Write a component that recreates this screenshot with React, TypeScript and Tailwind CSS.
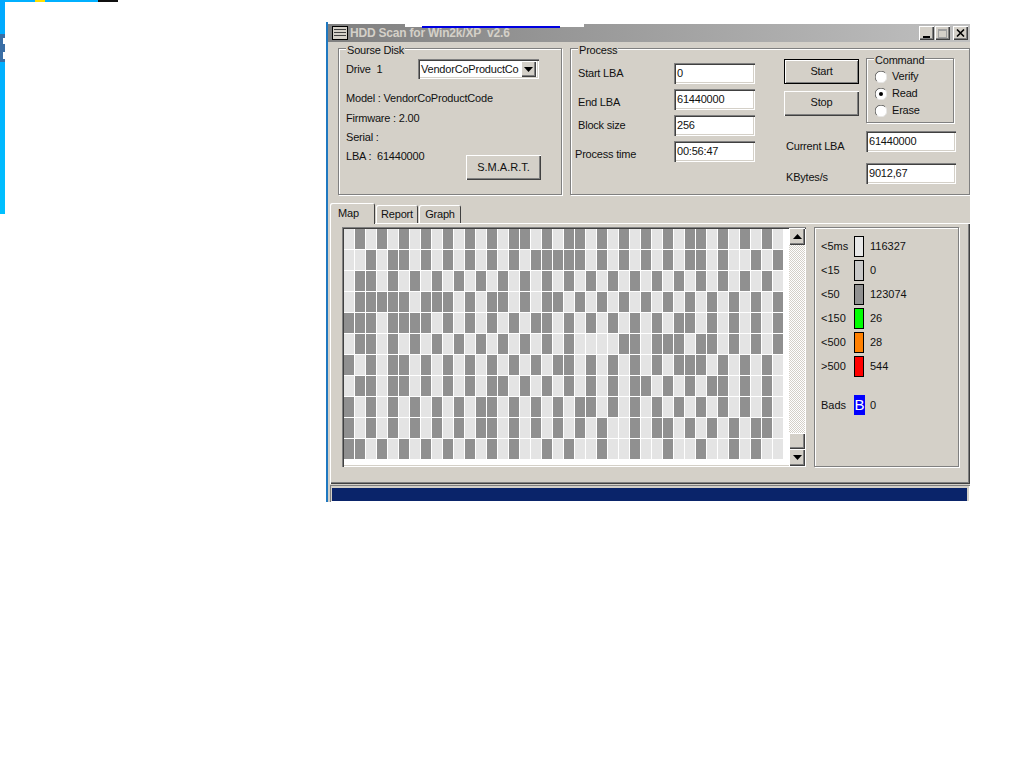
const mapRows = [
	"0101010101010101101011010101010110101010",
	"0010110101010101011111010101010110100101",
	"0110101010101010101010101010101010101010",
	"0111110111010110101101010101010101010101",
	"1110111101010101011010101010101101010101",
	"0110101010101010101010000110111011010101",
	"1010110101010101010110101010101110101010",
	"0110110101010110101010101011010101101010",
	"1010101010101101010101101010101010101010",
	"1010101010101101010101010010110101010110",
	"1101010101010101001010010010010010010100",
];

const legend = [
	{ label: "<5ms", value: "116327", color: "bg-[#e8e8e8]" },
	{ label: "<15", value: "0", color: "bg-[#c8c8c8]" },
	{ label: "<50", value: "123074", color: "bg-[#909090]" },
	{ label: "<150", value: "26", color: "bg-[#00ff00]" },
	{ label: "<500", value: "28", color: "bg-[#ff8000]" },
	{ label: ">500", value: "544", color: "bg-[#ff0000]" },
];

const processRows = [
	{ label: "Start LBA", value: "0", labelClass: "pl-[3px]" },
	{ label: "End LBA", value: "61440000", labelClass: "pl-[3px] pt-[5px]" },
	{ label: "Block size", value: "256", labelClass: "pl-[3px]" },
	{ label: "Process time", value: "00:56:47", labelClass: "pt-[5px]" },
];

const raised =
	"bg-[#d4d0c8] shadow-[inset_1px_1px_0_#fff,inset_-1px_-1px_0_#404040,inset_-2px_-2px_0_#808080]";
const sunken =
	"bg-white shadow-[inset_1px_1px_0_#808080,inset_2px_2px_0_#404040,inset_-1px_-1px_0_#fff,inset_-2px_-2px_0_#d4d0c8]";
const etched = "border border-[#808080] shadow-[1px_1px_0_#fff,inset_1px_1px_0_#fff]";

function Field({ value, className }: { value: string; className: string }) {
	return <div className={`${sunken} ${className} h-[21px] pl-[3px] flex items-center`}>{value}</div>;
}

function Group({ title, className, children }: { title: string; className: string; children: React.ReactNode }) {
	return (
		<div className={`relative ${etched} ${className}`}>
			<span className="absolute left-[7px] top-[-6px] h-[15px] leading-[15px] bg-[#d4d0c8] px-px">{title}</span>
			{children}
		</div>
	);
}

function Radio({ label, checked }: { label: string; checked?: boolean }) {
	return (
		<div className="flex items-center h-[17px] gap-[5px]">
			<svg width="12" height="12" viewBox="0 0 12 12">
				<circle cx="6" cy="6" r="5.5" fill="#fff" />
				<path d="M1.8 10.2A5.5 5.5 0 0 1 10.2 1.8" fill="none" stroke="#606060" strokeWidth="1" />
				<path d="M10.2 1.8A5.5 5.5 0 0 1 1.8 10.2" fill="none" stroke="#e8e8e8" strokeWidth="1" />
				{checked && <circle cx="6" cy="6" r="2" fill="#000" />}
			</svg>
			<span>{label}</span>
		</div>
	);
}

function CaptionButton({ children }: { children: React.ReactNode }) {
	return <div className={`${raised} w-[15px] h-[14px] flex items-center justify-center`}>{children}</div>;
}

function ScrollArrow({ up }: { up?: boolean }) {
	return (
		<div className={`${raised} h-[17px] flex items-center justify-center`}>
			<svg width="9" height="5" viewBox="0 0 9 5">
				<path d={up ? "M4.5 0L9 5H0Z" : "M0 0H9L4.5 5Z"} fill="#000" />
			</svg>
		</div>
	);
}

export default function App() {
	return (
		<div className="relative w-[1024px] h-[768px] bg-white overflow-hidden font-['Liberation_Sans',Arial,sans-serif] text-[11px] tracking-[-0.2px] text-[#111]">
			{/* bits of the desktop left around the window */}
			<div className="absolute left-0 top-0 w-[5px] h-[214px] bg-gradient-to-b from-[#00a8ff] to-[#00c0ff]">
				<div className="relative mt-[34px] h-[28px] bg-[#3a6ea5]">
					<div className="absolute left-[3px] top-[4px] w-[2px] h-[6px] bg-white" />
					<div className="absolute left-[3px] top-[18px] w-[2px] h-[7px] bg-white" />
				</div>
			</div>
			<div className="absolute left-[5px] top-0 w-[113px] h-[2px] bg-[#00b0ff]">
				<div className="absolute left-[30px] w-[10px] h-[2px] bg-[#ffe000]" />
				<div className="absolute left-[93px] w-[20px] h-[2px] bg-[#101010]" />
			</div>
			<div className="absolute left-[326px] top-[22px] w-[2px] h-[480px] bg-[#1f78c0]" />

			<div className="absolute left-[328px] top-[24px] w-[642px] h-[478px] bg-[#d4d0c8] flex flex-col">
				{/* title bar */}
				<div className="h-[18px] shrink-0 flex items-center pl-[4px] pr-[2px] bg-gradient-to-r from-[#808080] to-[#c0c0c0]">
					<svg width="16" height="14" viewBox="0 0 16 14" className="shrink-0">
						<rect x="0.5" y="0.5" width="15" height="13" fill="#d4d0c8" stroke="#000" />
						<rect x="2" y="3" width="12" height="1" fill="#404040" />
						<rect x="2" y="6" width="12" height="1" fill="#404040" />
						<rect x="2" y="9" width="12" height="1" fill="#404040" />
					</svg>
					<span className="ml-[2px] font-bold text-[12px] tracking-[-0.2px] text-[#d4d0c8] whitespace-pre">HDD Scan for Win2k/XP  v2.6</span>
					<div className="ml-auto flex">
						<CaptionButton>
							<div className="w-[7px] h-[2px] bg-black mt-[7px] mr-px" />
						</CaptionButton>
						<div className="ml-px">
							<CaptionButton>
								<div className="w-[9px] h-[9px] border border-[#a0a0a0] border-t-2" />
							</CaptionButton>
						</div>
						<div className="ml-[3px]">
							<CaptionButton>
								<svg width="9" height="8" viewBox="0 0 9 8">
									<path d="M1 0.5L8 7.5M8 0.5L1 7.5" stroke="#000" strokeWidth="1.6" />
								</svg>
							</CaptionButton>
						</div>
					</div>
				</div>

				{/* top groups */}
				<div className="flex mt-[6px] ml-[10px] gap-[8px] shrink-0">
					<Group title="Sourse Disk" className="w-[224px] h-[147px] pl-[7px] pt-[10px]">
						<div className="flex items-center h-[20px]">
							<span className="w-[72px] pt-px whitespace-pre">Drive  1</span>
							<div className={`${sunken} w-[121px] h-[20px] flex items-center pl-[3px] pr-[2px]`}>
								<span className="whitespace-nowrap w-[100px]">VendorCoProductCo</span>
								<div className={`${raised} w-[15px] h-[16px] flex items-center justify-center`}>
									<svg width="9" height="5" viewBox="0 0 9 5">
										<path d="M0 0H9L4.5 5Z" fill="#000" />
									</svg>
								</div>
							</div>
						</div>
						<div className="flex mt-[9px]">
							<div className="w-[120px] shrink-0 whitespace-nowrap">
								<div className="h-[20px] leading-[20px]">Model : VendorCoProductCode</div>
								<div className="h-[20px] leading-[20px]">Firmware : 2.00</div>
								<div className="h-[19px] leading-[19px]">Serial :</div>
								<div className="h-[18px] leading-[18px] whitespace-pre">LBA :  61440000</div>
							</div>
							<div className={`${raised} w-[75px] h-[25px] mt-[67px] flex items-center justify-center tracking-normal`}>S.M.A.R.T.</div>
						</div>
					</Group>

					<Group title="Process" className="w-[400px] h-[147px] flex">
						<div className="w-[180px] ml-[4px] mt-[14px] shrink-0 flex flex-col gap-[5px]">
							{processRows.map((row) => (
								<div key={row.label} className="flex items-center justify-between">
									<span className={`${row.labelClass} leading-[11px]`}>{row.label}</span>
									<Field value={row.value} className="w-[81px]" />
								</div>
							))}
						</div>
						<div className="ml-[29px] mt-[10px] w-[172px]">
							<div className="flex gap-[7px]">
								<div className="flex flex-col gap-[7px] w-[75px]">
									<div className="h-[25px] flex items-center justify-center bg-[#d4d0c8] border border-black shadow-[inset_1px_1px_0_#fff,inset_-1px_-1px_0_#808080]">Start</div>
									<div className={`${raised} h-[25px] pb-[2px] flex items-center justify-center`}>Stop</div>
								</div>
								<Group title="Command" className="w-[88px] h-[65px] mt-[-1px] pl-[8px] pt-[9px]">
									<Radio label="Verify" />
									<Radio label="Read" checked />
									<Radio label="Erase" />
								</Group>
							</div>
							<div className="flex items-center justify-between mt-[8px] pl-[2px]">
								<span className="pt-[9px] leading-[11px]">Current LBA</span>
								<Field value="61440000" className="w-[90px]" />
							</div>
							<div className="flex items-center justify-between mt-[11px] pl-[2px]">
								<span className="pt-[7px] leading-[11px]">KBytes/s</span>
								<Field value="9012,67" className="w-[90px]" />
							</div>
						</div>
					</Group>
				</div>

				{/* tabs */}
				<div className="flex items-end ml-[2px] mt-[9px] h-[19px] shrink-0">
					<div className="relative z-10 w-[45px] h-[21px] mb-[-1px] pl-[8px] pt-[2px] bg-[#d4d0c8] rounded-t-[2px] shadow-[inset_1px_1px_0_#fff,inset_-1px_0_0_#404040]">Map</div>
					<div className="w-[42px] h-[18px] ml-px pt-px flex items-center justify-center rounded-t-[2px] shadow-[inset_1px_1px_0_#fff,inset_-1px_0_0_#404040]">Report</div>
					<div className="w-[42px] h-[18px] ml-px pt-px flex items-center justify-center rounded-t-[2px] shadow-[inset_1px_1px_0_#fff,inset_-1px_0_0_#404040]">Graph</div>
				</div>

				{/* page */}
				<div className="ml-[2px] w-[640px] h-[261px] shrink-0 pt-[4px] pl-[12px] flex gap-[8px] shadow-[inset_1px_1px_0_#fff,inset_-1px_-1px_0_#404040,inset_-2px_-2px_0_#808080]">
					<div className={`${sunken} w-[464px] h-[240px] flex pl-[2px] pt-[2px]`}>
						<div className="grid grid-cols-[repeat(40,10px)] auto-rows-[20px] gap-px w-[445px] content-start">
							{mapRows.flatMap((row, r) =>
								row.split("").map((c, i) => (
									<div key={r + "-" + i} className={c === "1" ? "bg-[#909090]" : "bg-[#e4e4e4]"} />
								))
							)}
						</div>
						<div className="w-[16px] h-[238px] mt-[-1px] flex flex-col bg-[repeating-conic-gradient(#d4d0c8_0_25%,#fff_0_50%)] bg-[length:2px_2px]">
							<ScrollArrow up />
							<div className={`${raised} h-[16px] mt-auto`} />
							<ScrollArrow />
						</div>
					</div>
					<div className={`${etched} w-[145px] h-[240px] pl-[6px] pt-[6px] tracking-normal`}>
						{legend.map((item) => (
							<div key={item.label} className="flex items-center h-[24px]">
								<span className="w-[33px]">{item.label}</span>
								<div className={`${item.color} w-[10px] h-[21px] border border-black`} />
								<span className="ml-[6px]">{item.value}</span>
							</div>
						))}
						<div className="flex items-center h-[24px] mt-[15px]">
							<span className="w-[33px] pt-px">Bads</span>
							<div className="w-[11px] h-[20px] bg-[#0000ff] text-white text-[15px] leading-[20px] text-center">B</div>
							<span className="ml-[5px] pt-px">0</span>
						</div>
					</div>
				</div>

				{/* progress */}
				<div className="mt-[1px] ml-[2px] w-[640px] h-[17px] pt-[3px] pb-px pl-[2px] pr-[3px] shadow-[inset_1px_1px_0_#808080,inset_-1px_-1px_0_#fff]">
					<div className="h-full bg-[#0a246a]" />
				</div>
			</div>

			{/* strip from the window underneath */}
			<div className="absolute left-[405px] top-[24px] w-[179px] h-[3px] bg-white">
				<div className="absolute left-[17px] top-[2px] w-[138px] h-[2px] bg-[#0000e0]" />
			</div>
		</div>
	);
}
